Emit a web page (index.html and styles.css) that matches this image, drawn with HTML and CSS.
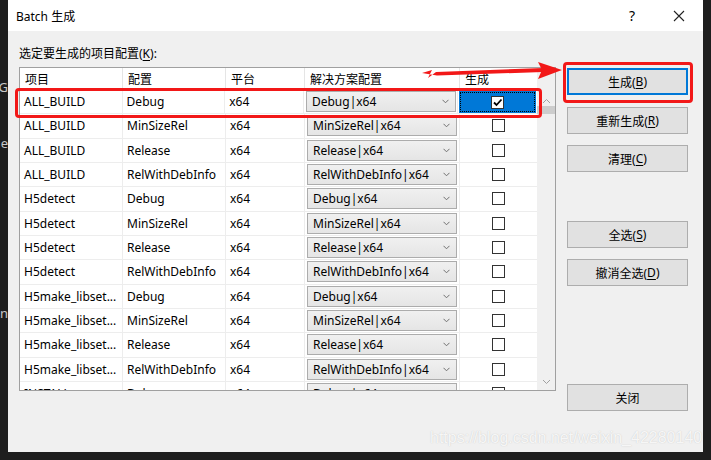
FILE: index.html
```html
<html>
  <head>
    <meta charset="utf-8" />
    <title>Batch 生成</title>
    <link rel="stylesheet" href="styles.css">
  </head>
  <body>
    <div class="screen">
      <div class="side">
        <div class="bg-text t1">lG</div>
        <div class="bg-text t2">e</div>
        <div class="bg-text t3">n(</div>
      </div>
      <div class="dialog">
        <div class="titlebar">
          <span class="title">Batch 生成</span>
          <span class="help">?</span>
          <svg class="close" width="12" height="12" viewBox="0 0 12 12"><path d="M1 1L11 11M11 1L1 11" stroke="#222" stroke-width="1.1" fill="none"/></svg>
        </div>
        <div class="body">
          <div class="main">
            <div class="caption">选定要生成的项目配置(<u>K</u>):</div>
            <div class="list">
              <div class="grid">
                <div class="row head">
                  <div class="c c1">项目</div>
                  <div class="c c2">配置</div>
                  <div class="c c3">平台</div>
                  <div class="c c4">解决方案配置</div>
                  <div class="c c5">生成</div>
                </div>
                <div id="rows"></div>
              </div>
              <div class="scroll">
                <svg width="9" height="6" viewBox="0 0 9 6"><path d="M1 5L4.5 1.5L8 5" stroke="#a0a0a0" fill="none"/></svg>
                <div class="thumb"></div>
                <div class="track"></div>
                <svg width="9" height="6" viewBox="0 0 9 6"><path d="M1 1L4.5 4.5L8 1" stroke="#a0a0a0" fill="none"/></svg>
              </div>
            </div>
          </div>
          <div class="actions">
            <div class="btn default">生成(<u>B</u>)</div>
            <div class="btn">重新生成(<u>R</u>)</div>
            <div class="btn">清理(<u>C</u>)</div>
            <div class="btn gap1">全选(<u>S</u>)</div>
            <div class="btn">撤消全选(<u>D</u>)</div>
            <div class="btn gap2">关闭</div>
          </div>
        </div>

        <div class="mark-row"></div>
        <div class="mark-btn"></div>
        <svg class="arrow" width="711" height="120" viewBox="0 0 711 120">
          <polygon points="422,73 432,70 428,78 436,72 543,68 543,72 437,75.5" fill="#f21818"/>
          <polygon points="538,62 562,70 538,79 542,70" fill="#f21818"/>
        </svg>
        <div class="watermark">https://blog.csdn.net/weixin_42280140</div>
      </div>
      <div class="side right"></div>
    </div>
    <script>
      var data = [
        ["ALL_BUILD", "Debug"],
        ["ALL_BUILD", "MinSizeRel"],
        ["ALL_BUILD", "Release"],
        ["ALL_BUILD", "RelWithDebInfo"],
        ["H5detect", "Debug"],
        ["H5detect", "MinSizeRel"],
        ["H5detect", "Release"],
        ["H5detect", "RelWithDebInfo"],
        ["H5make_libset...", "Debug"],
        ["H5make_libset...", "MinSizeRel"],
        ["H5make_libset...", "Release"],
        ["H5make_libset...", "RelWithDebInfo"],
        ["INSTALL", "Debug"]
      ];
      var chev = '<svg class="chev" width="7" height="5" viewBox="0 0 7 5"><path d="M0.5 0.8L3.5 3.8L6.5 0.8" stroke="#707070" fill="none"/></svg>';
      var tick = '<svg width="11" height="11" viewBox="0 0 11 11"><path d="M2 5.5L4.5 8L9.5 2.5" stroke="#000" stroke-width="1.8" fill="none"/></svg>';
      var html = "";
      data.forEach(function (d, i) {
        var sel = i === 0;
        html += '<div class="row">' +
          '<div class="c c1">' + d[0] + '</div>' +
          '<div class="c c2">' + d[1] + '</div>' +
          '<div class="c c3">x64</div>' +
          '<div class="c c4"><div class="combo"><span>' + d[1] + '|x64</span>' + chev + '</div></div>' +
          '<div class="c c5' + (sel ? ' selected' : '') + '"><span class="box">' + (sel ? tick : '') + '</span></div>' +
          '</div>';
      });
      document.getElementById("rows").innerHTML = html;
    </script>
  </body>
</html>
```

FILE: styles.css
```css
* {
  margin: 0;
  padding: 0;
  box-sizing: border-box;
}
body {
  background: #1e1e1e;
  font-family: "Noto Sans", "Noto Sans CJK SC", sans-serif;
  font-size: 12px;
  color: #000;
}
.screen {
  display: flex;
  width: 711px;
  height: 460px;
}
.side {
  width: 8px;
  height: 452px;
  overflow: hidden;
  color: #c8c8c8;
  font-size: 13px;
}
.side.right {
  width: 8px;
}
.bg-text {
  width: 8px;
  text-align: right;
  white-space: nowrap;
  direction: rtl;
}
.t1 {
  margin-top: 78px;
}
.t2 {
  margin-top: 38px;
}
.t3 {
  margin-top: 152px;
}
.dialog {
  position: relative;
  width: 695px;
  height: 452px;
  background: #f0f0f0;
}
.titlebar {
  height: 31px;
  background: #fff;
  display: flex;
  align-items: center;
  padding-left: 8px;
}
.title {
  flex: 1;
  font-size: 12px;
}
.help {
  font-size: 14px;
  margin-right: 38px;
}
.close {
  margin-right: 18px;
}
.body {
  display: flex;
  padding-left: 11px;
}
.main {
  width: 537px;
}
.caption {
  padding-top: 15px;
  line-height: 16px;
  height: 36px;
}
.list {
  display: flex;
  height: 324px;
  border: 1px solid #a0a0a0;
  background: #fff;
  overflow: hidden;
}
.grid {
  width: 517px;
}
.row {
  display: flex;
  height: 24.33px;
  border-bottom: 1px solid #ededed;
}
.row.head {
  height: 22px;
  border-bottom: 1px solid #e5e5e5;
}
.c {
  display: flex;
  align-items: center;
  padding-left: 4px;
  border-right: 1px solid #ededed;
  white-space: nowrap;
  overflow: hidden;
}
.head .c {
  border-right: 1px solid #e5e5e5;
  padding-left: 5px;
  padding-top: 1px;
}
.c1 {
  width: 103px;
}
.c2 {
  width: 103px;
}
.c3 {
  width: 79px;
}
.c4 {
  width: 155px;
  padding-left: 2px;
}
.head .c4 {
  padding-left: 5px;
}
.c5 {
  width: 77px;
  justify-content: center;
  padding-left: 0;
  border-right: none;
}
.head .c5 {
  justify-content: flex-start;
  border-right: none;
}
.combo {
  display: flex;
  align-items: center;
  justify-content: space-between;
  width: 150px;
  height: 21px;
  padding: 0 6px 0 5px;
  border: 1px solid #acacac;
  background: linear-gradient(#f0f0f0, #e5e5e5);
}
.box {
  display: flex;
  align-items: center;
  justify-content: center;
  width: 13px;
  height: 13px;
  border: 1px solid #333;
  background: #fff;
}
.c5.selected {
  background: #0078d7;
  outline: 1px dotted #000;
  outline-offset: -2px;
  margin: 1px 1px 0 1px;
}
.scroll {
  width: 18px;
  background: #f0f0f0;
  display: flex;
  flex-direction: column;
  align-items: center;
  padding-top: 30px;
}
.thumb {
  width: 18px;
  height: 8px;
  margin-top: 2px;
  background: #cdcdcd;
}
.track {
  flex: 1;
}
.scroll svg:last-child {
  margin-bottom: 5px;
}
.actions {
  width: 121px;
  margin-left: 11px;
  padding-top: 37px;
}
.btn {
  height: 27px;
  margin-bottom: 11px;
  border: 1px solid #adadad;
  background: #e1e1e1;
  display: flex;
  align-items: center;
  justify-content: center;
}
.btn.default {
  border: 2px solid #0078d7;
  margin-bottom: 12px;
}
.gap1 {
  margin-top: 49px;
}
.gap2 {
  margin-top: 98px;
}
u {
  text-decoration-thickness: 1px;
  text-underline-offset: 2px;
}
.mark-row {
  position: absolute;
  left: 7px;
  top: 88px;
  width: 527px;
  height: 30px;
  border: 3px solid #f21818;
  border-radius: 4px;
}
.mark-btn {
  position: absolute;
  left: 555px;
  top: 62px;
  width: 130px;
  height: 41px;
  border: 3px solid #f21818;
  border-radius: 4px;
}
.arrow {
  position: absolute;
  left: -8px;
  top: 0;
}
.watermark {
  position: absolute;
  left: 422px;
  top: 429px;
  font-family: "Liberation Sans", sans-serif;
  font-size: 16px;
  color: rgba(255, 255, 255, 0.85);
  text-shadow: 0 0 1px rgba(150, 150, 150, 0.5);
  white-space: nowrap;
}
```
